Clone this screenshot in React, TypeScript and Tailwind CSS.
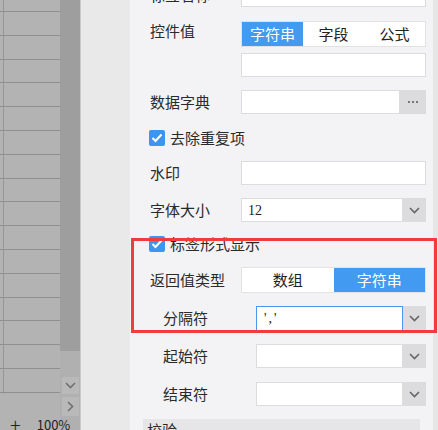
import type { ReactNode } from 'react';

const CJK = { fontFamily: '"Noto Sans CJK SC", "Noto Sans", sans-serif' };

function Chevron({ dir = 'down', color = '#666' }: { dir?: 'down' | 'right'; color?: string }) {
  return dir === 'down' ? (
    <svg width="11" height="7" viewBox="0 0 11 7">
      <path d="M1 1 L5.5 5.5 L10 1" fill="none" stroke={color} strokeWidth="1.6" />
    </svg>
  ) : (
    <svg width="7" height="11" viewBox="0 0 7 11">
      <path d="M1 1 L5.5 5.5 L1 10" fill="none" stroke={color} strokeWidth="1.6" />
    </svg>
  );
}

function Label({ children, indent }: { children: ReactNode; indent?: boolean }) {
  return (
    <div className={indent ? 'ml-[13px] w-[93px] shrink-0' : 'w-[91px] shrink-0'}>
      {children}
    </div>
  );
}

function Input({ children, className = '' }: { children?: ReactNode; className?: string }) {
  return (
    <div
      className={`flex h-full flex-1 items-center border border-[#dcdce0] bg-white pl-[6px] text-[13px] text-[#222] ${className}`}
    >
      {children}
    </div>
  );
}

function Select({ children, focused }: { children?: ReactNode; focused?: boolean }) {
  return (
    <div className="flex h-full flex-1">
      <div
        className={`flex flex-1 items-center bg-white pl-[6px] text-[14px] text-[#222] ${
          focused ? 'border border-[#4a98ee]' : 'border border-[#dcdce0]'
        }`}
        style={{ fontFamily: '"Liberation Serif", serif' }}
      >
        {children}
      </div>
      <div className="flex w-[23px] shrink-0 items-center justify-center bg-[#dcdcdf]">
        <Chevron />
      </div>
    </div>
  );
}

function Segmented({ items, active }: { items: string[]; active: number }) {
  return (
    <div className="flex h-full flex-1 border border-[#e2e2e5] bg-white">
      {items.map((t, i) => (
        <div
          key={t}
          className={`flex flex-1 items-center justify-center text-[15px] ${
            i === active ? 'bg-[#429bf0] text-white' : 'text-[#222]'
          }`}
        >
          {t}
        </div>
      ))}
    </div>
  );
}

function Check({ label }: { label: string }) {
  return (
    <div className="flex h-[20px] items-center gap-[5px]">
      <div className="-ml-px flex h-[16px] w-[16px] items-center justify-center rounded-[2px] bg-[#3d95ef]">
        <svg width="12" height="10" viewBox="0 0 12 10">
          <path d="M1.5 5 L4.5 8 L10.5 1.5" fill="none" stroke="#fff" strokeWidth="2" />
        </svg>
      </div>
      <span>{label}</span>
    </div>
  );
}

function Sheet() {
  const rows = Array.from({ length: 16 });
  return (
    <div className="relative flex h-full w-[60px] shrink-0 flex-col bg-[#b3b3b3]">
      <div className="h-[12px] shrink-0 border-b border-[#8f8f8f]" />
      {rows.map((_, i) => (
        <div key={i} className="h-[23.8px] shrink-0 border-b border-[#8f8f8f]" />
      ))}
      <div className="absolute top-0 left-[3px] h-[394px] w-px bg-[#979797]" />
      <div className="mt-[22px] flex items-center gap-[16px] pl-[10px] text-[13px] leading-none text-[#222]" style={CJK}>
        <span className="text-[20px] font-light">+</span>
        <span>100%</span>
      </div>
    </div>
  );
}

export default function App() {
  return (
    <div className="relative flex h-[430px] w-[438px] overflow-hidden bg-[#f3f3f5]" style={CJK}>
      <Sheet />
      <div className="flex w-[20px] shrink-0 flex-col bg-[#b0b0b0]">
        <div className="h-[351px] bg-[#9e9e9e]" />
        <div className="mt-[26px] ml-[2px] flex h-[17px] w-[17px] items-center justify-center bg-[#b9b9b9]">
          <Chevron color="#707070" />
        </div>
        <div className="mt-[3px] ml-[2px] flex h-[19px] w-[17px] items-center justify-center bg-[#b9b9b9]">
          <Chevron dir="right" color="#707070" />
        </div>
      </div>
      <div className="w-[50px] shrink-0 border-l border-[#c9c9c9] bg-[#e9e9e9]" />

      <div className="flex w-[296px] shrink-0 flex-col pl-[20px] text-[15px] text-[#2a2a2a]">
        <div className="-mt-[17px] flex h-[24px] shrink-0 items-center">
          <Label>标签名称</Label>
          <Input />
        </div>
        <div className="mt-[14px] flex h-[26px] shrink-0 items-start">
          <Label>
            <div className="leading-[20px]">控件值</div>
          </Label>
          <Segmented items={['字符串', '字段', '公式']} active={0} />
        </div>
        <div className="mt-[6px] flex h-[24px] shrink-0">
          <div className="w-[91px] shrink-0" />
          <Input />
        </div>
        <div className="mt-[13px] flex h-[24px] shrink-0 items-center">
          <Label>数据字典</Label>
          <div className="flex h-full flex-1">
            <Input />
            <div className="flex w-[26px] shrink-0 items-center justify-center gap-[2px] bg-[#dcdcdf]">
              <span className="h-[2px] w-[2px] bg-[#777]" />
              <span className="h-[2px] w-[2px] bg-[#777]" />
              <span className="h-[2px] w-[2px] bg-[#777]" />
            </div>
          </div>
        </div>
        <div className="mt-[14px] shrink-0">
          <Check label="去除重复项" />
        </div>
        <div className="mt-[13px] flex h-[24px] shrink-0 items-center">
          <Label>水印</Label>
          <Input />
        </div>
        <div className="mt-[13px] flex h-[24px] shrink-0 items-center">
          <Label>字体大小</Label>
          <Select>12</Select>
        </div>
        <div className="mt-[12px] shrink-0">
          <Check label="标签形式显示" />
        </div>
        <div className="mt-[13px] flex h-[26px] shrink-0 items-center">
          <Label>返回值类型</Label>
          <Segmented items={['数组', '字符串']} active={1} />
        </div>
        <div className="mt-[13px] flex h-[25px] shrink-0 items-center">
          <Label indent>分隔符</Label>
          <Select focused>
            <span className="pl-[1px] tracking-[2px]">','</span>
          </Select>
        </div>
        <div className="mt-[13px] flex h-[24px] shrink-0 items-center">
          <Label indent>起始符</Label>
          <Select />
        </div>
        <div className="mt-[14px] flex h-[24px] shrink-0 items-center">
          <Label indent>结束符</Label>
          <Select />
        </div>
        <div className="mt-[13px] ml-[-7px] h-[24px] w-[277px] shrink-0 bg-[#e6e6e9] pl-[4px] pt-[1px] leading-[20px]">
          校验
        </div>
      </div>

      <div className="ml-[7px] flex w-[12px] shrink-0">
        <div className="w-[9px] bg-[#e6e6e6]" />
        <div className="flex-1 bg-[#ededed]" />
      </div>

      <div className="pointer-events-none absolute top-[238px] left-[131px] h-[95px] w-[306px] border-[3px] border-[#f03c3c]" />
    </div>
  );
}
